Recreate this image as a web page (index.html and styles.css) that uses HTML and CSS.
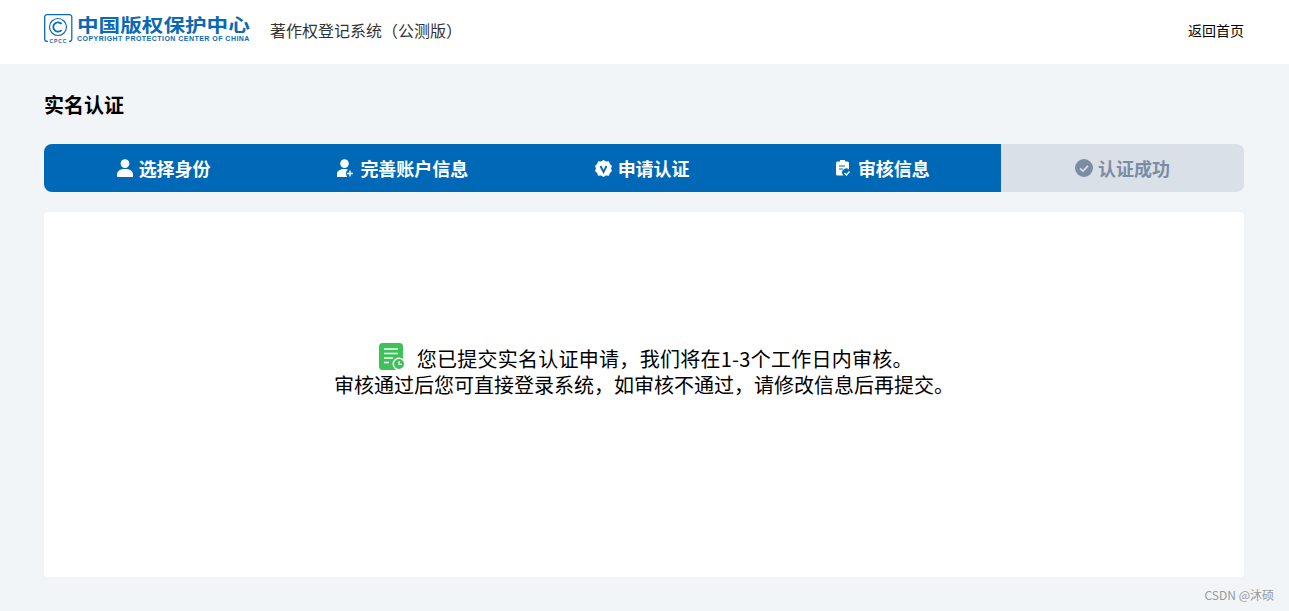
FILE: index.html
```html
<!DOCTYPE html>
<html lang="zh-CN">
<head>
<meta charset="utf-8">
<title>实名认证</title>
<link rel="stylesheet" href="styles.css">
</head>
<body>
<header class="header">
  <div class="brand">
    <div class="logo">
      <svg class="logo-mark" viewBox="0 0 29 29" width="29" height="29">
        <path d="M4 27.400H3A2.300 2.300 0 0 1 .7 25.100V3A2.300 2.300 0 0 1 3 .7h22.500A2.300 2.300 0 0 1 27.800 3v22.100a2.300 2.300 0 0 1-2.300 2.300h-.5" fill="none" stroke="#0a6ab5" stroke-width="1.300"/>
        <circle cx="14" cy="13" r="8.500" fill="none" stroke="#0a6ab5" stroke-width="1.200"/>
        <path d="M17.600 10a4.700 4.700 0 1 0 0 6" fill="none" stroke="#0a6ab5" stroke-width="1.800"/>
        <text x="14.300" y="28.600" class="logo-cpcc" text-anchor="middle">CPCC</text>
      </svg>
      <div class="logo-text">
        <div class="logo-cn">中国版权保护中心</div>
        <div class="logo-en">COPYRIGHT PROTECTION CENTER OF CHINA</div>
      </div>
    </div>
    <span class="system-name">著作权登记系统（公测版）</span>
  </div>
  <a class="home-link">返回首页</a>
</header>
<main class="main">
  <h1 class="title">实名认证</h1>
  <ol class="steps">
    <li class="step step-done">
      <svg class="step-icon" viewBox="0 0 16 18" width="16" height="18"><circle cx="8" cy="4.600" r="4.400" fill="currentColor"/><path d="M0 18v-2.500C0 12 3 10 8 10s8 2 8 5.500V18z" fill="currentColor"/></svg>
      <span>选择身份</span>
    </li>
    <li class="step step-done">
      <svg class="step-icon" viewBox="0 0 17 18" width="17" height="18"><circle cx="7.500" cy="4.600" r="4.300" fill="currentColor"/><path d="M0 18v-3c0-3 3-5 7.500-5 1.500 0 2.800.2 3.800.6-1.600 1-2.300 2.400-2.300 4 0 1.300.4 2.500 1.200 3.400z" fill="currentColor"/><path d="M13 11.500v6M10 14.500h6" stroke="currentColor" stroke-width="1.400" fill="none"/></svg>
      <span>完善账户信息</span>
    </li>
    <li class="step step-done">
      <svg class="step-icon" viewBox="0 0 17 17" width="17" height="17"><path d="M8.500 0l2.500 1.500 2.900-.2 1 2.700 2.100 2-1 2.500 1 2.500-2.100 2-1 2.700-2.900-.2L8.500 17 6 15.500l-2.900.2-1-2.700L0 11l1-2.500L0 6l2.100-2 1-2.700 2.900.2z" fill="currentColor"/><path d="M5.500 6l3 6 3-6" fill="none" stroke="#0069b7" stroke-width="1.800"/></svg>
      <span>申请认证</span>
    </li>
    <li class="step step-done step-wide">
      <svg class="step-icon" viewBox="0 0 14 16" width="14" height="16"><path d="M1.500 1.500h2.500V0h5v1.500h2.500A1.500 1.500 0 0 1 13 3v6.500a4 4 0 0 0-5.500 6H1.500A1.500 1.500 0 0 1 0 14V3a1.500 1.500 0 0 1 1.500-1.500z" fill="currentColor"/><path d="M3 6h6M3 9h4" stroke="#0069b7" stroke-width="1.200"/><path d="M8.500 13l2 2 3-3.500" fill="none" stroke="currentColor" stroke-width="1.300"/></svg>
      <span>审核信息</span>
    </li>
    <li class="step step-todo">
      <svg class="step-icon" viewBox="0 0 18 18" width="18" height="18"><circle cx="9" cy="9" r="9" fill="#7b8ca5"/><path d="M5 9.300l3 2.800 5-5.200" fill="none" stroke="#dae0e7" stroke-width="1.600"/></svg>
      <span>认证成功</span>
    </li>
  </ol>
  <section class="card">
    <p class="notice">
      <svg class="notice-icon" viewBox="0 0 27 28" width="27" height="28">
        <rect x="0" y="0" width="24" height="27" rx="3.500" fill="#3cc258"/>
        <path d="M5 6h14M5 10.500h14M5 15h9M5 19.500h5" stroke="#fff" stroke-width="1.300"/>
        <circle cx="20" cy="21" r="6.500" fill="#fff"/>
        <circle cx="20" cy="21" r="5" fill="#3cc258"/>
        <path d="M20 18v3.300h3" fill="none" stroke="#fff" stroke-width="1.200"/>
      </svg>
      <span class="notice-first">您已提交实名认证申请，我们将在1-3个工作日内审核。</span><br>审核通过后您可直接登录系统，如审核不通过，请修改信息后再提交。
    </p>
  </section>
  <div class="watermark">CSDN @沐硕</div>
</main>
</body>
</html>
```
FILE: styles.css
```css
* { box-sizing: border-box; }
html, body { margin: 0; height: 100%; }
body {
  font-family: "Noto Sans CJK SC", "Noto Sans", "Liberation Sans", sans-serif;
  background: #f1f5f8;
  color: #000;
  overflow: hidden;
}
.header {
  height: 64px;
  background: #fff;
  display: flex;
  align-items: center;
  justify-content: space-between;
  padding: 0 45px 4px 44px;
}
.brand { display: flex; align-items: center; }
.logo { display: flex; align-items: flex-start; width: 226px; height: 32px; color: #0a6ab5; }
.logo-mark { flex: none; margin-right: 4px; }
.logo-cpcc { font: 700 5px "Liberation Sans", sans-serif; letter-spacing: .9px; fill: #0a6ab5; }
.logo-text { width: 173px; }
.logo-cn { font-size: 21.600px; font-weight: 700; line-height: 20px; white-space: nowrap; transform: scaleY(.85); }
.logo-en { font: 700 7px/8px "Liberation Sans", sans-serif; letter-spacing: .47px; white-space: nowrap; margin-top: 1px; }
.system-name { font-size: 16px; color: #333; line-height: 24px; }
.home-link { font-size: 14px; color: #000; line-height: 24px; }
.main { padding: 0 45px 0 44px; height: 547px; position: relative; }
.title { margin: 0; padding-top: 27px; font-size: 20px; font-weight: 700; line-height: 28px; }
.steps {
  list-style: none;
  margin: 25px 0 20px;
  padding: 0;
  display: grid;
  grid-template-columns: 239.250px 239.250px 239.250px 239.250px 1fr;
  height: 48px;
  border-radius: 8px;
  overflow: hidden;
}
.step {
  display: flex;
  align-items: center;
  justify-content: center;
  gap: 6px;
  font-size: 18px;
  font-weight: 700;
}
.step-wide { gap: 8px; padding-left: 3px; }
.step-done { background: #0069b7; color: #fff; }
.step-todo { background: #dae0e7; color: #7b8ca5; gap: 5px; }
.step-icon { flex: none; }
.card {
  height: 365px;
  background: #fff;
  border-radius: 4px;
  display: flex;
  align-items: center;
  justify-content: center;
  padding-bottom: 43px;
}
.notice {
  margin: 0 0 5px;
  font-size: 20px;
  line-height: 26px;
  text-align: center;
}
.notice-first { letter-spacing: .27px; }
.notice-icon { vertical-align: -4px; margin: 0 6px 0 4px; }
.watermark {
  position: absolute;
  right: 15px;
  bottom: 8px;
  font-size: 12px;
  line-height: 16px;
  color: #999;
}
```
